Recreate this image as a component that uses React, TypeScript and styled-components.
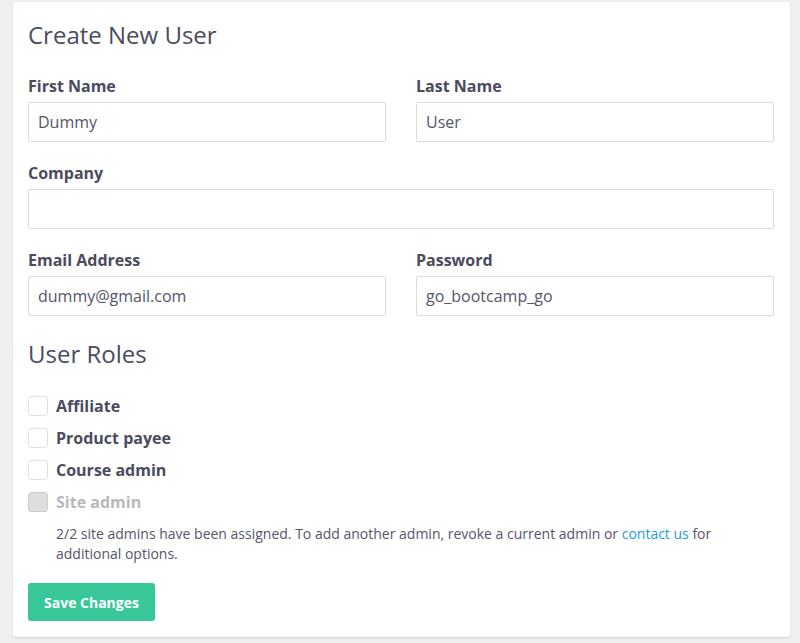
import React from "react";
import styled, { createGlobalStyle } from "styled-components";

const Global = createGlobalStyle`
  html, body { margin: 0; padding: 0; background: #efefef; }
  body { font-family: "Open Sans", "Liberation Sans", sans-serif; color: #4b4b5c; }
  * { box-sizing: border-box; }
`;

const Page = styled.div`
  padding: 2px 10px 7px 13px;
`;

const Card = styled.div`
  background: #fff;
  border-radius: 3px;
  box-shadow: 0 1px 2px rgba(0, 0, 0, 0.12);
  padding: 17px 16px 16px 15px;
`;

const Heading = styled.h2<{ $top?: number; $gap: number }>`
  margin: ${(p) => p.$top ?? 0}px 0 ${(p) => p.$gap}px;
  font-size: 24px;
  line-height: 32px;
  font-weight: 400;
  color: #4b4b5e;
`;

const Grid = styled.div`
  display: grid;
  grid-template-columns: 1fr 1fr;
  column-gap: 30px;
`;

const Field = styled.div<{ $full?: boolean }>`
  grid-column: ${(p) => (p.$full ? "1 / -1" : "auto")};
  margin-bottom: 20px;
`;

const Label = styled.label`
  display: block;
  font-size: 16px;
  font-weight: 700;
  line-height: 22px;
  margin-bottom: 5px;
  color: #4b4b5e;
`;

const Input = styled.input`
  display: block;
  width: 100%;
  height: 40px;
  border: 1px solid #dcdcdc;
  border-radius: 2px;
  padding: 0 9px;
  font-family: "Open Sans", "Liberation Sans", sans-serif;
  font-size: 16px;
  color: #55556a;
  background: #fff;
  outline: none;
`;

const Roles = styled.div`
  margin-top: 18px;
`;

const RoleRow = styled.label<{ $disabled?: boolean }>`
  display: flex;
  align-items: center;
  gap: 8px;
  height: 32px;
  font-size: 16px;
  font-weight: 700;
  color: ${(p) => (p.$disabled ? "#b8b8bc" : "#4b4b5e")};
`;

const Box = styled.span<{ $disabled?: boolean }>`
  width: 20px;
  height: 20px;
  border-radius: 3px;
  border: 1px solid ${(p) => (p.$disabled ? "#cfcfcf" : "#e0e0e0")};
  background: ${(p) => (p.$disabled ? "#dedede" : "#fff")};
  flex: none;
`;

const Help = styled.p`
  margin: 6px 0 0 28px;
  font-size: 14px;
  line-height: 20px;
  color: #55556a;
`;

const Link = styled.a`
  color: #1b9ee0;
  text-decoration: none;
`;

const Button = styled.button`
  margin-top: 19px;
  height: 38px;
  padding: 0 16px;
  border: none;
  border-radius: 3px;
  background: #38c799;
  color: #fff;
  font-family: "Open Sans", "Liberation Sans", sans-serif;
  font-size: 14px;
  font-weight: 700;
`;

const roles = [
  { name: "Affiliate" },
  { name: "Product payee" },
  { name: "Course admin" },
  { name: "Site admin", disabled: true },
];

export default function App() {
  return (
    <Page>
      <Global />
      <Card>
        <Heading $gap={24}>Create New User</Heading>
        <Grid>
          <Field>
            <Label>First Name</Label>
            <Input defaultValue="Dummy" />
          </Field>
          <Field>
            <Label>Last Name</Label>
            <Input defaultValue="User" />
          </Field>
          <Field $full>
            <Label>Company</Label>
            <Input defaultValue="" />
          </Field>
          <Field>
            <Label>Email Address</Label>
            <Input defaultValue="dummy@gmail.com" />
          </Field>
          <Field>
            <Label>Password</Label>
            <Input defaultValue="go_bootcamp_go" />
          </Field>
        </Grid>
        <Heading $top={2} $gap={20}>User Roles</Heading>
        <Roles>
          {roles.map((r) => (
            <RoleRow key={r.name} $disabled={r.disabled}>
              <Box $disabled={r.disabled} />
              {r.name}
            </RoleRow>
          ))}
        </Roles>
        <Help>
          2/2 site admins have been assigned. To add another admin, revoke a current admin or{" "}
          <Link href="#">contact us</Link> for additional options.
        </Help>
        <Button>Save Changes</Button>
      </Card>
    </Page>
  );
}
